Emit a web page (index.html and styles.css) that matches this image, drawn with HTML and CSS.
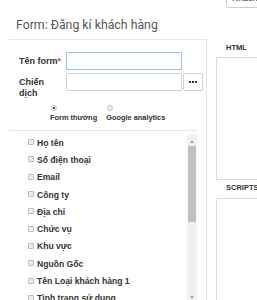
FILE: index.html
```html
<!DOCTYPE html>
<html lang="vi">
<head>
    <meta charset="UTF-8">
    <meta name="viewport" content="width=device-width, initial-scale=1.0">
    <title>Form: Đăng kí khách hàng</title>
    <link rel="stylesheet" href="styles.css">
</head>
<body>
    <div class="topbar">
        <button class="btn-top" type="button">Khách hàng</button>
    </div>
    <h1 class="page-title">Form: Đăng kí khách hàng</h1>
    <div class="layout">
        <section class="config">
            <div class="form-fields">
                <div class="field">
                    <label class="field-label" for="formName">Tên form<span class="req">*</span></label>
                    <input id="formName" class="field-input is-focus" type="text">
                </div>
                <div class="field field-top">
                    <label class="field-label" for="campaign">Chiến dịch</label>
                    <input id="campaign" class="field-input" type="text">
                    <button class="btn-more" type="button"><span></span><span></span><span></span></button>
                </div>
                <div class="form-type">
                    <label class="type-opt"><input type="radio" name="formType" checked><span>Form thường</span></label>
                    <label class="type-opt"><input type="radio" name="formType"><span>Google analytics</span></label>
                </div>
            </div>
            <hr class="divider">
            <div class="list-wrap">
                <ul class="field-list">
                    <li><input type="checkbox" id="f1"><label for="f1">Họ tên</label></li>
                    <li><input type="checkbox" id="f2"><label for="f2">Số điện thoại</label></li>
                    <li><input type="checkbox" id="f3"><label for="f3">Email</label></li>
                    <li><input type="checkbox" id="f4"><label for="f4">Công ty</label></li>
                    <li><input type="checkbox" id="f5"><label for="f5">Địa chỉ</label></li>
                    <li><input type="checkbox" id="f6"><label for="f6">Chức vụ</label></li>
                    <li><input type="checkbox" id="f7"><label for="f7">Khu vực</label></li>
                    <li><input type="checkbox" id="f8"><label for="f8">Nguồn Gốc</label></li>
                    <li><input type="checkbox" id="f9"><label for="f9">Tên Loại khách hàng 1</label></li>
                    <li><input type="checkbox" id="f10"><label for="f10">Tình trạng sử dụng</label></li>
                    <li><input type="checkbox" id="f11"><label for="f11">Ngày sinh</label></li>
                    <li><input type="checkbox" id="f12"><label for="f12">Giới tính</label></li>
                </ul>
                <div class="scrollbar">
                    <div class="sb-btn sb-up"></div>
                    <div class="sb-thumb"></div>
                    <div class="sb-rest"></div>
                    <div class="sb-btn sb-down"></div>
                </div>
            </div>
        </section>
        <section class="output">
            <h2 class="out-title">HTML</h2>
            <textarea class="out-box out-html"></textarea>
            <h2 class="out-title">SCRIPTS</h2>
            <textarea class="out-box out-script"></textarea>
        </section>
    </div>
</body>
</html>
```

FILE: styles.css
```css
html, body {
  margin: 0;
}
body {
  width: 257px;
  height: 300px;
  overflow: hidden;
  background: #fff;
  color: #333;
  font-family: "Liberation Sans", Arial, sans-serif;
}
.topbar {
  display: flex;
  justify-content: flex-end;
  height: 8px;
}
.btn-top {
  box-sizing: border-box;
  width: 61px;
  height: 20px;
  margin: -12px -30px 0 0;
  padding: 0 0 0 5px;
  border: 1px solid #ccc;
  border-radius: 2px;
  background: #fff;
  color: #333;
  font: 9px/18px "Liberation Sans", Arial, sans-serif;
  text-align: left;
}
.page-title {
  margin: 0;
  padding: 10px 0 7px 16px;
  color: #555;
  font: 400 12.3px/14px Roboto, "Liberation Sans", sans-serif;
}
.layout {
  display: flex;
  margin-left: 9px;
  height: 261px;
}

/* left: settings */
.config {
  flex: 0 0 198px;
  min-width: 0;
  box-sizing: border-box;
  border-top: 1px solid #e6e6e6;
  border-right: 1px solid #e6e6e6;
}
.form-fields {
  padding: 12px 0 7px 10px;
}
.field {
  display: flex;
  align-items: center;
}
.field-top {
  align-items: flex-start;
  margin-top: 3px;
}
.field-label {
  flex: 0 0 44px;
  margin-right: 3px;
  font-size: 9px;
  font-weight: bold;
  line-height: 11px;
}
.field-top .field-label {
  padding-top: 4px;
}
.req {
  color: #e04848;
}
.field-input {
  box-sizing: border-box;
  width: 116px;
  height: 18px;
  margin: 0;
  padding: 0 4px;
  border: 1px solid #d2d2d2;
  border-radius: 1px;
  outline: none;
}
.field-input.is-focus {
  border-color: #9cc4ea;
}
.btn-more {
  display: flex;
  align-items: center;
  justify-content: center;
  gap: 1px;
  box-sizing: border-box;
  width: 20px;
  height: 18px;
  margin: 0 0 0 1px;
  padding: 0;
  border: 1px solid #d2d2d2;
  border-radius: 2px;
  background: #fff;
}
.btn-more span {
  width: 2px;
  height: 2px;
  background: #333;
}
.form-type {
  display: flex;
  gap: 9px;
  margin: 6px 0 0 31px;
}
.type-opt {
  display: flex;
  flex-direction: column;
  align-items: flex-start;
  font-size: 7.4px;
  font-weight: bold;
  line-height: 10px;
}
.type-opt input {
  -webkit-appearance: none;
  appearance: none;
  box-sizing: border-box;
  width: 6px;
  height: 6px;
  margin: 0 0 2px 1px;
  border: 1px solid #bdbdbd;
  border-radius: 50%;
  background: #f2f2f2;
}
.type-opt input:checked {
  background: radial-gradient(circle, #555 0, #555 1px, #f2f2f2 1.6px);
}
.divider {
  height: 0;
  margin: 0 9px 0 0;
  border: 0;
  border-top: 1px solid #e6e6e6;
}
.list-wrap {
  display: flex;
  height: 168px;
  margin: 3px 9px 0 0;
}
.field-list {
  flex: 1;
  margin: 0;
  padding: 0 0 0 19px;
  list-style: none;
  overflow: hidden;
}
.field-list li {
  display: flex;
  align-items: center;
  height: 17.3px;
  font-size: 8.6px;
  font-weight: bold;
}
.field-list input {
  -webkit-appearance: none;
  appearance: none;
  box-sizing: border-box;
  width: 6px;
  height: 6px;
  margin: -1px 3px 0 0;
  border: 1px solid #bdbdbd;
  border-radius: 1px;
  background: #ececec;
}
.scrollbar {
  display: flex;
  flex-direction: column;
  flex: 0 0 10px;
  background: #f1f1f1;
}
.sb-btn {
  display: flex;
  justify-content: center;
  height: 12px;
}
.sb-up {
  align-items: flex-end;
  padding-bottom: 3px;
  box-sizing: border-box;
}
.sb-down {
  align-items: flex-start;
  padding-top: 6px;
  box-sizing: border-box;
}
.sb-up::before,
.sb-down::before {
  content: '';
  border-left: 2.5px solid transparent;
  border-right: 2.5px solid transparent;
}
.sb-up::before {
  border-bottom: 3px solid #a3a3a3;
}
.sb-down::before {
  border-top: 3px solid #a3a3a3;
}
.sb-thumb {
  height: 76px;
  margin: 0 1px;
  background: #c1c1c1;
}
.sb-rest {
  flex: 1;
}

/* right: output */
.output {
  flex: 1;
  padding: 4px 0 0 9px;
  overflow: hidden;
}
.out-title {
  margin: 0 0 4px 10px;
  font-size: 7.5px;
  font-weight: bold;
  line-height: 10px;
}
.out-box {
  display: block;
  box-sizing: border-box;
  width: 60px;
  margin: 0;
  padding: 0;
  border: 1px solid #dcdcdc;
  resize: none;
}
.out-html {
  height: 123px;
  margin-bottom: 3px;
}
.out-script {
  height: 110px;
  margin-top: 5px;
}
```
